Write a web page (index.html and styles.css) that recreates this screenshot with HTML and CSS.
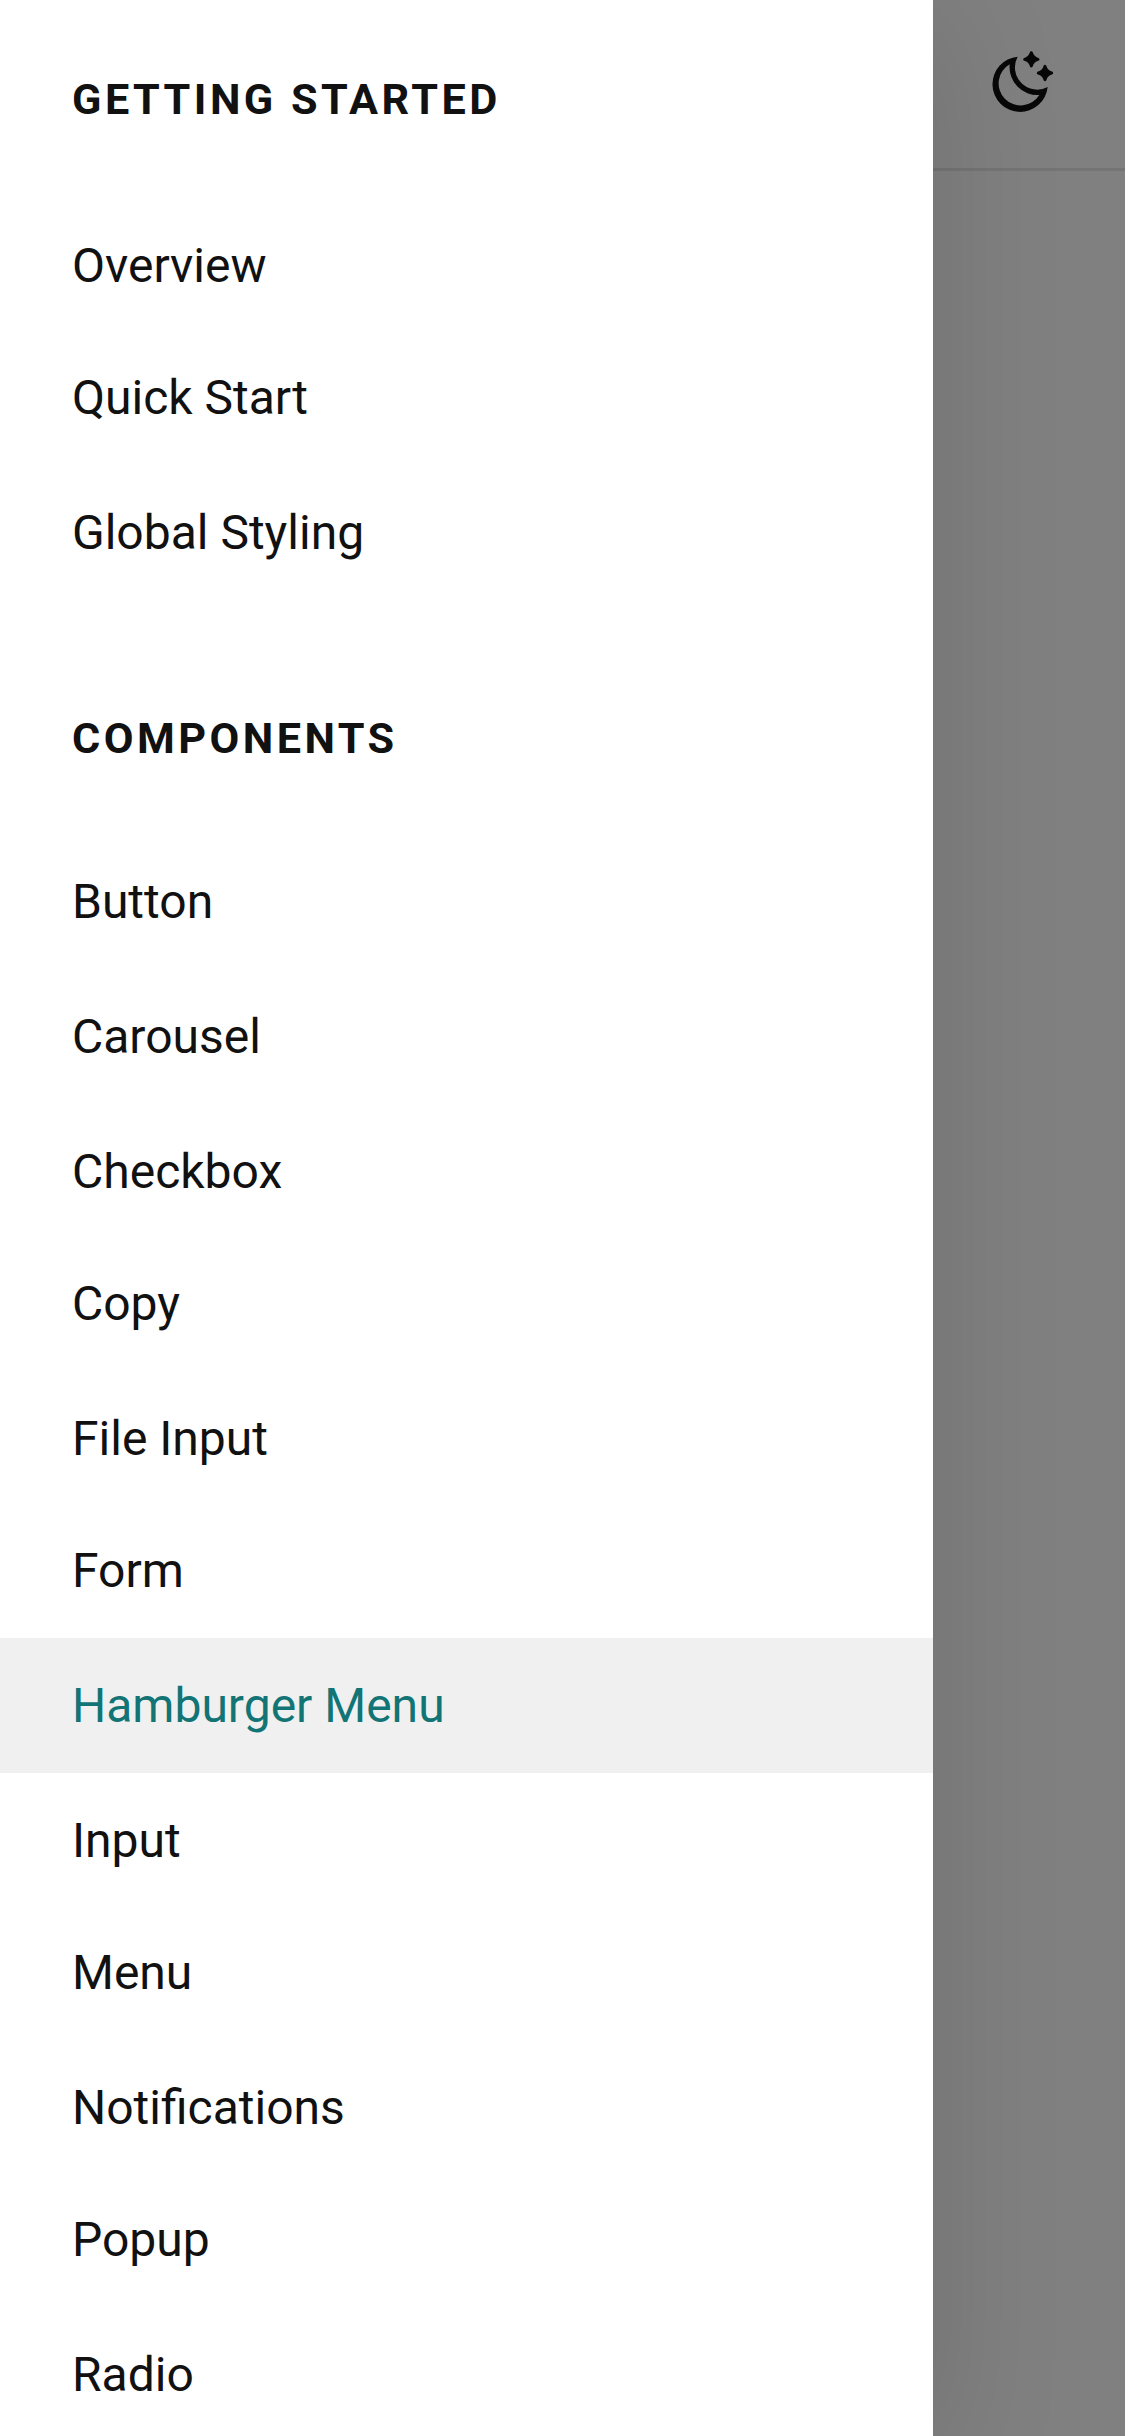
FILE: index.html
```html
<!DOCTYPE html>
<html lang="en">
<head>
<meta charset="utf-8">
<title>Hamburger Menu</title>
<link rel="stylesheet" href="styles.css">
</head>
<body>
<div class="layout">
<nav class="drawer">
<h2 class="heading">GETTING STARTED</h2>
<ul class="list">
<li class="item short">Overview</li>
<li class="item">Quick Start</li>
<li class="item">Global Styling</li>
</ul>
<h2 class="heading second">COMPONENTS</h2>
<ul class="list">
<li class="item">Button</li>
<li class="item">Carousel</li>
<li class="item short">Checkbox</li>
<li class="item">Copy</li>
<li class="item short">File Input</li>
<li class="item">Form</li>
<li class="item active">Hamburger Menu</li>
<li class="item short">Input</li>
<li class="item">Menu</li>
<li class="item short">Notifications</li>
<li class="item">Popup</li>
<li class="item">Radio</li>
</ul>
</nav>
<div class="page">
<header class="topbar">
<svg class="moon" viewBox="89 60 192 192" fill="currentColor"><path fill-rule="evenodd" d="M172 80A83 83 0 1 0 262 171A66.8 66.8 0 0 1 172 80ZM148 103A66 66 0 1 0 237 195A84 84 0 0 1 148 103Z"/><g stroke="currentColor" stroke-width="9" stroke-linejoin="round"><path d="M213 68Q217 84 233 88Q217 92 213 108Q209 92 193 88Q209 84 213 68Z"/><path d="M254 109Q258 125 274 129Q258 133 254 149Q250 133 234 129Q250 125 254 109Z"/></g></svg>
</header>
</div>
</div>
</body>
</html>
```
FILE: styles.css
```css
body { margin: 0; font-family: Roboto, sans-serif; color: #111; }
.layout { display: flex; height: 2436px; overflow: hidden; }
.drawer { width: 933px; background: #fff; box-shadow: 0 18px 126px rgba(0,0,0,.13); z-index: 1; }
.heading { box-sizing: border-box; margin: 0; padding: 67px 72px 0; height: 198px; font-size: 43.2px; line-height: 66px; font-weight: 700; letter-spacing: .08em; }
.second { padding-top: 106px; height: 234px; }
.list { list-style: none; margin: 0; padding: 0; }
.item { height: 135px; line-height: 135px; padding-left: 72px; font-size: 48px; }
.short { height: 132px; }
.active { background: #f0f0f0; color: #127475; }
.page { flex: 1; background: #808080; }
.topbar { display: flex; box-sizing: border-box; height: 171px; padding: 50px 0 0 57px; border-bottom: 3px solid #747474; }
.moon { width: 64px; height: 64px; color: #080808; }
```
